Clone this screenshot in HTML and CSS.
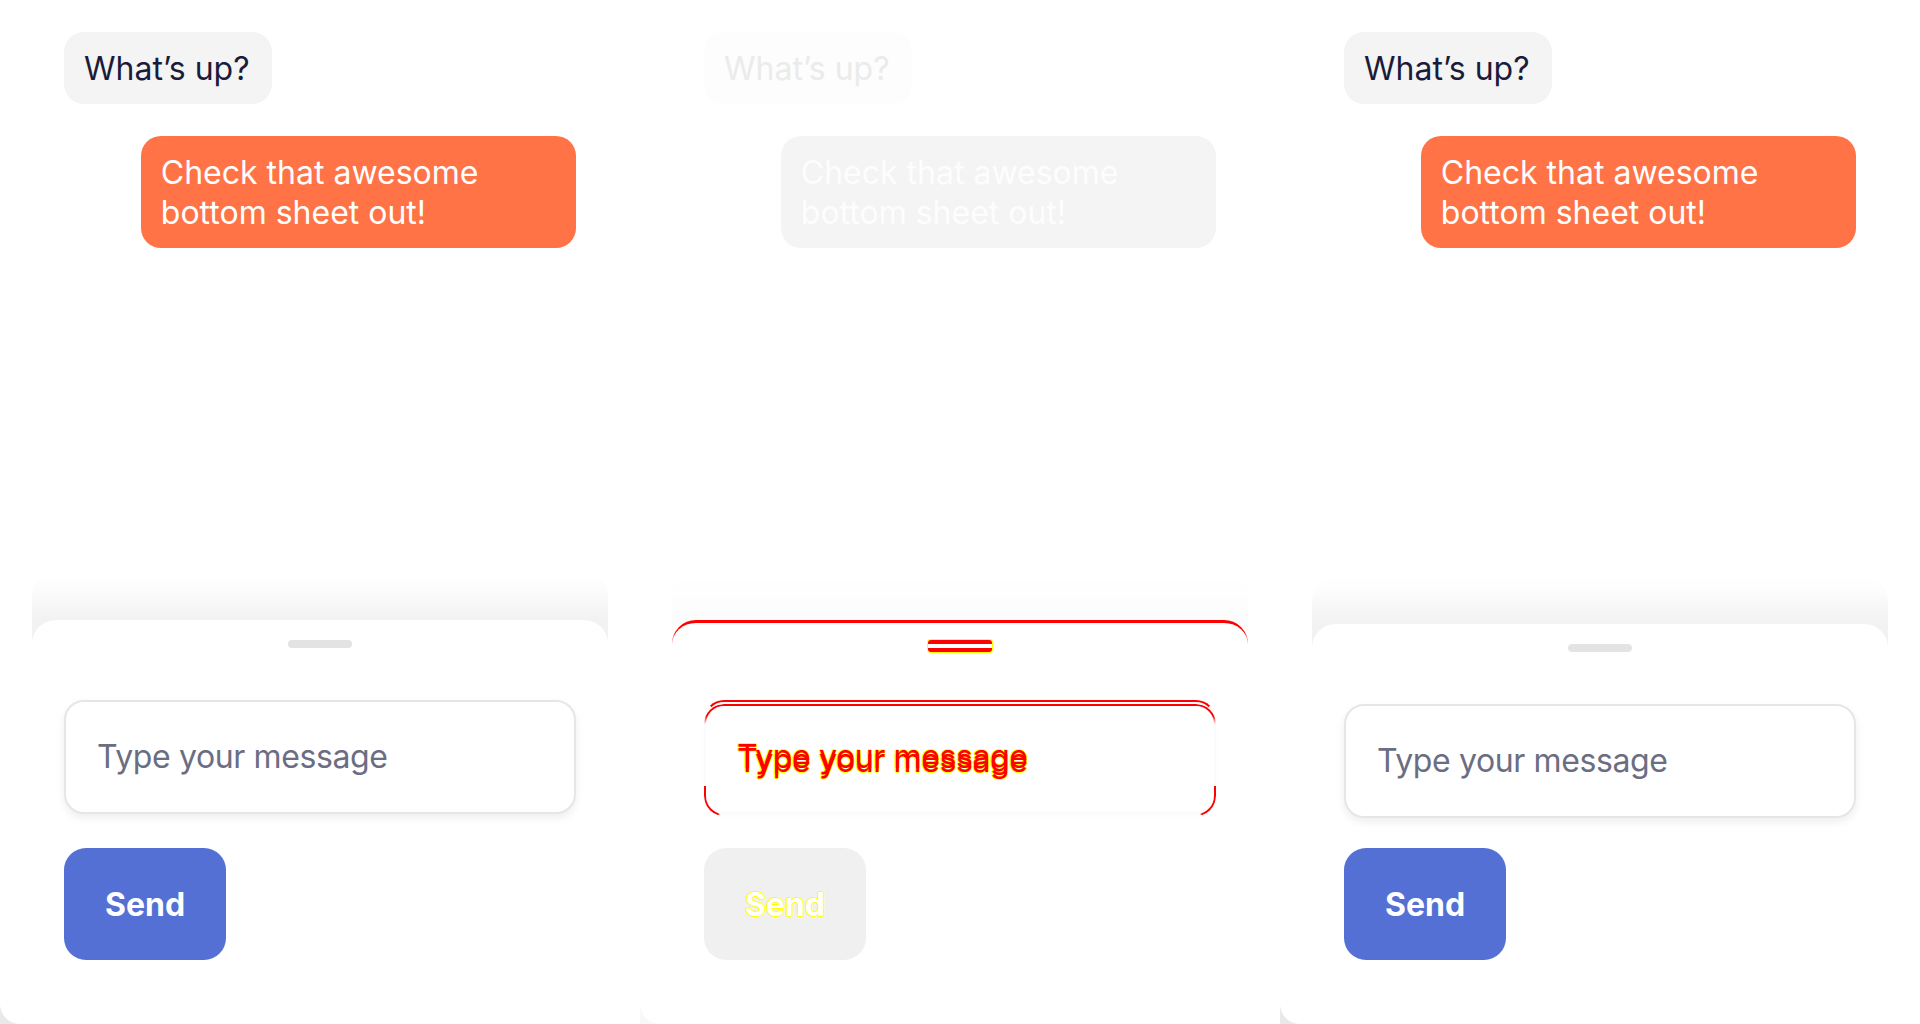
FILE: index.html
```html
<!DOCTYPE html>
<html lang="en">
<head>
<meta charset="utf-8">
<title>Bottom sheet comparison</title>
<link rel="stylesheet" href="styles.css">
</head>
<body>
<main class="stage">
  <section class="panel">
    <div class="thread">
      <div class="bubble bubble-in">What’s up?</div>
      <div class="bubble bubble-out">Check that awesome bottom sheet out!</div>
    </div>
    <div class="sheet-wrap">
      <div class="sheet">
        <div class="handle"></div>
        <div class="field"><span class="placeholder">Type your message</span></div>
        <button class="send" type="button">Send</button>
      </div>
    </div>
    <span class="corner"></span>
  </section>

  <section class="panel panel-diff">
    <div class="thread">
      <div class="bubble bubble-in">What’s up?</div>
      <div class="bubble bubble-out">Check that awesome bottom sheet out!</div>
    </div>
    <div class="sheet-wrap">
      <div class="sheet">
        <div class="handle"></div>
        <div class="field"><span class="placeholder">Type your message</span></div>
        <button class="send" type="button">Send</button>
      </div>
    </div>
    <span class="corner"></span>
  </section>

  <section class="panel panel-shifted">
    <div class="thread">
      <div class="bubble bubble-in">What’s up?</div>
      <div class="bubble bubble-out">Check that awesome bottom sheet out!</div>
    </div>
    <div class="sheet-wrap">
      <div class="sheet">
        <div class="handle"></div>
        <div class="field"><span class="placeholder">Type your message</span></div>
        <button class="send" type="button">Send</button>
      </div>
    </div>
    <span class="corner"></span>
  </section>
</main>
</body>
</html>
```

FILE: styles.css
```css
* {
  box-sizing: border-box;
}

html,
body {
  margin: 0;
  padding: 0;
  background: #ffffff;
}

body {
  font-family: "Inter", "Liberation Sans", sans-serif;
  color: #1b1c3a;
}

.stage {
  display: grid;
  grid-template-columns: repeat(3, 640px);
  height: 1024px;
  overflow: hidden;
}

.panel {
  position: relative;
  display: flex;
  flex-direction: column;
  justify-content: space-between;
  height: 1024px;
  background: #ffffff;
}

/* ---------- chat thread ---------- */
.thread {
  display: flex;
  flex-direction: column;
  align-items: flex-start;
  gap: 32px;
  padding: 32px 64px 0;
}

.bubble {
  font-size: 32px;
  line-height: 40px;
  letter-spacing: 0;
  border-radius: 20px;
  padding: 17px 22px 15px 20px;
}

.bubble-in {
  background: #f4f4f4;
  color: #1b1c3a;
}

.bubble-out {
  align-self: flex-end;
  width: 85%;
  background: #ff7346;
  color: #ffffff;
  padding: 17px 20px 15px;
}

/* ---------- bottom sheet ---------- */
.sheet-wrap {
  margin: 0 32px;
  padding-top: 48px;
  border-radius: 24px 24px 0 0;
  background: linear-gradient(to bottom,
      rgba(0, 0, 0, 0) 0,
      rgba(0, 0, 0, 0.012) 16px,
      rgba(0, 0, 0, 0.035) 34px,
      rgba(0, 0, 0, 0.05) 48px,
      rgba(0, 0, 0, 0.05) 100%);
}

.sheet {
  display: flex;
  flex-direction: column;
  background: #ffffff;
  border-radius: 24px 24px 0 0;
  padding: 20px 32px 64px;
}

.handle {
  align-self: center;
  width: 64px;
  height: 8px;
  border-radius: 4px;
  background: #e3e3e3;
  margin-bottom: 52px;
}

.field {
  position: relative;
  display: flex;
  align-items: center;
  height: 114px;
  padding: 0 31px;
  border: 2px solid #e6e6e6;
  border-radius: 20px;
  background: #ffffff;
  box-shadow: 0 4px 8px rgba(0, 0, 0, 0.07);
}

.placeholder {
  font-size: 32px;
  line-height: 40px;
  letter-spacing: -0.012em;
  color: #6b6e82;
}

.send {
  align-self: flex-start;
  margin-top: 34px;
  width: 162px;
  height: 112px;
  border: none;
  border-radius: 22px;
  background: #5470d4;
  color: #ffffff;
  font-family: "Inter", "Liberation Sans", sans-serif;
  font-size: 32px;
  font-weight: 700;
  letter-spacing: 0;
  padding: 0;
}

.corner {
  position: absolute;
  left: 0;
  bottom: 0;
  width: 20px;
  height: 20px;
  background: radial-gradient(circle at 100% 0, rgba(255, 255, 255, 0) 19.5px, #e9e9e9 20.5px);
}

/* ---------- shifted variant (third panel) ---------- */
.panel-shifted .send {
  margin-top: 30px;
}

/* ---------- visual diff (middle panel) ---------- */
.panel-diff .bubble-in {
  background: #fdfdfd;
  color: #ebebeb;
}

.panel-diff .bubble-out {
  background: #f4f4f4;
  color: #fdfdfd;
}

.panel-diff .sheet-wrap {
  background: linear-gradient(to bottom, rgba(0, 0, 0, 0) 0, rgba(0, 0, 0, 0.012) 48px, rgba(0, 0, 0, 0.012) 100%);
}

.panel-diff .sheet {
  border-top: 3px solid #ff0000;
  padding-top: 17px;
}

.panel-diff .handle {
  height: 12px;
  border-radius: 3px;
  background: #ffffff;
  border-top: 4px solid #ff0000;
  border-bottom: 4px solid #ff0000;
  box-shadow: 0 0 0 1px #ffff00;
  margin-bottom: 48px;
}

.panel-diff .field {
  border: 2px solid #fbfbfb;
  border-top-color: #ff0000;
  box-shadow: 0 4px 8px rgba(0, 0, 0, 0.012);
}

.panel-diff .field::before {
  content: "";
  position: absolute;
  left: -2px;
  right: -2px;
  top: 2px;
  height: 30px;
  border-top: 2px solid #ff0000;
  border-left: 2px solid #ff0000;
  border-right: 2px solid #ff0000;
  border-radius: 20px 20px 0 0;
  -webkit-mask-image: linear-gradient(to bottom, #000 0, #000 12px, transparent 20px);
  mask-image: linear-gradient(to bottom, #000 0, #000 12px, transparent 20px);
}

.panel-diff .field::after {
  content: "";
  position: absolute;
  left: -2px;
  right: -2px;
  bottom: -4px;
  height: 28px;
  border-bottom: 2px solid #ff0000;
  border-left: 2px solid #ff0000;
  border-right: 2px solid #ff0000;
  border-radius: 0 0 20px 20px;
  -webkit-mask-image: linear-gradient(to right, #000 0, #000 14px, transparent 16px, transparent calc(100% - 16px), #000 calc(100% - 14px));
  mask-image: linear-gradient(to right, #000 0, #000 14px, transparent 16px, transparent calc(100% - 16px), #000 calc(100% - 14px));
}

.panel-diff .placeholder {
  color: #ff0000;
  text-shadow:
    0 4px 0 #ff0000,
    1px 0 0 #ffff00,
    -1px 0 0 #ffff00,
    0 -1px 0 #ffff00,
    1px 4px 0 #ffff00,
    -1px 4px 0 #ffff00,
    0 5px 0 #ffff00;
}

.panel-diff .send {
  background: #f0f0f0;
  color: #ffffff;
  text-shadow:
    1px 0 0 #ffff00,
    -1px 0 0 #ffff00,
    0 1px 0 #ffff00,
    0 -1px 0 #ffff00;
}

.panel-diff .corner {
  background: radial-gradient(circle at 100% 0, rgba(255, 255, 255, 0) 19.5px, #f8f8f8 20.5px);
}
```
